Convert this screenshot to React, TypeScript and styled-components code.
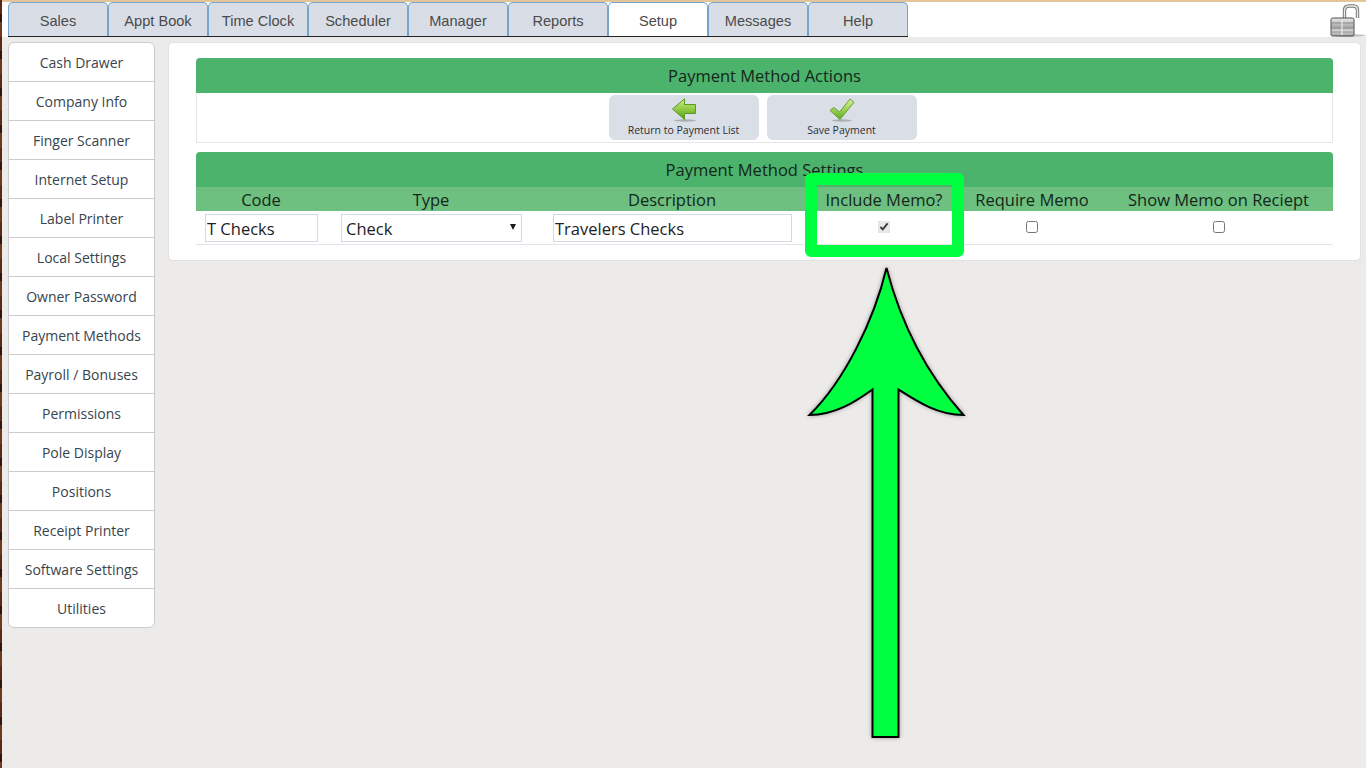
import React from 'react'
import styled, { createGlobalStyle } from 'styled-components'

const GlobalStyle = createGlobalStyle`
  html, body {
    margin: 0;
    padding: 0;
    height: 100%;
    background: #ecebe9;
    overflow: hidden;
  }
  * {
    box-sizing: border-box;
  }
`

const Page = styled.div`
  position: relative;
  width: 1366px;
  height: 768px;
  padding: 2px 0 0 2px;
  background-color: #ecebe9;
  font-family: "Open Sans", sans-serif;
  color: #1c2a22;
  overflow: hidden;
`

const TopEdge = styled.div`
  position: absolute;
  top: 0;
  left: 0;
  right: 0;
  height: 2px;
  background: #e6c49a;
`

const LeftEdge = styled.div`
  position: absolute;
  top: 0;
  left: 0;
  bottom: 0;
  width: 2px;
  background: repeating-linear-gradient(180deg, #5a2a14 0 14px, #2f150b 14px 22px, #6e3a1e 22px 37px);
`

const TopBar = styled.div`
  display: flex;
  justify-content: space-between;
  height: 35px;
  padding-left: 6px;
  background: #fff;
`

const Tabs = styled.nav`
  display: flex;
  height: 35px;
  border-bottom: 1px solid #1d2326;
`

const Tab = styled.div<{ $active?: boolean }>`
  display: flex;
  align-items: center;
  justify-content: center;
  width: 100px;
  height: 34px;
  padding-top: 3px;
  background: ${p => (p.$active ? '#fff' : '#d9dee6')};
  border: 1px solid #74a5cf;
  border-bottom: none;
  border-radius: 5px 5px 0 0;
  font-family: "Liberation Sans", Arial, sans-serif;
  font-size: 14.6px;
  color: #4a4a4a;
`

const LockBox = styled.div`
  width: 36px;
  height: 35px;
  margin-right: 0;
  padding: 1px 0 0 0;
`

const Body = styled.div`
  display: flex;
  align-items: flex-start;
  gap: 13px;
  padding: 5px 5px 0 6px;
`

const SideMenu = styled.ul`
  width: 148px;
  margin: 0;
  padding: 0;
  list-style: none;
  background: #fff;
  border: 1px solid #cccccc;
  border-radius: 6px;
`

const SideItem = styled.li`
  display: flex;
  align-items: center;
  justify-content: center;
  height: 39px;
  font-size: 14px;
  color: #38444d;
  border-bottom: 1px solid #cccccc;

  &:last-child {
    height: 38px;
    border-bottom: none;
  }
`

const Card = styled.main`
  flex: 1;
  height: 219px;
  padding: 15px 27px 0;
  background: #fff;
  border: 1px solid #e2e2e2;
  border-radius: 5px;
`

const SectionTitle = styled.h2`
  display: flex;
  align-items: center;
  justify-content: center;
  height: 35px;
  margin: 0;
  background: #4bb36b;
  border-radius: 4px 4px 0 0;
  font-size: 16.5px;
  font-weight: 400;
  color: #14261b;
`

const ActionsRow = styled.div`
  display: flex;
  justify-content: center;
  gap: 8px;
  height: 50px;
  margin-bottom: 9px;
  padding: 2px 4px 0 0;
  border: 1px solid #e6e6e6;
  border-top: none;
`

const ActionButton = styled.button`
  display: flex;
  flex-direction: column;
  align-items: center;
  width: 150px;
  height: 45px;
  padding: 3px 0 0;
  background: #dadee6;
  border: none;
  border-radius: 6px;
  font-family: "Open Sans", sans-serif;
  font-size: 10.5px;
  line-height: 14px;
  color: #2a2f33;

  svg {
    display: block;
    margin-bottom: 1px;
  }
`

const SettingsGrid = styled.div`
  display: grid;
  grid-template-columns: 130px 210px 272px 152px 144px 229px;
`

const HeadCell = styled.div`
  display: flex;
  align-items: center;
  justify-content: center;
  height: 24px;
  background: #6dc07f;
  font-size: 16.5px;
  color: #14261b;
`

const Cell = styled.div<{ $pad: number; $width: number }>`
  height: 34px;
  padding: 3px 0 0 ${p => p.$pad}px;
  border-bottom: 1px solid #e2e4ea;

  & > * {
    width: ${p => p.$width}px;
  }
`

const CheckCell = styled.div`
  display: flex;
  justify-content: center;
  height: 34px;
  padding-top: 10px;
  border-bottom: 1px solid #e2e4ea;
`

const TextField = styled.input`
  display: block;
  height: 28px;
  padding: 0 0 0 1px;
  background: #fff;
  border: 1px solid #d6d8e2;
  font-family: "Open Sans", sans-serif;
  font-size: 16.5px;
  color: #1c2226;
  outline: none;
`

const SelectField = styled.div`
  display: flex;
  align-items: center;
  justify-content: space-between;
  height: 28px;
  padding: 0 5px 0 4px;
  background: #fff;
  border: 1px solid #d6d8e2;
  font-size: 16.5px;
  color: #1c2226;
`

const Caret = styled.span`
  width: 0;
  height: 0;
  margin-bottom: 3px;
  border-left: 3px solid transparent;
  border-right: 3px solid transparent;
  border-top: 6px solid #1a1a1a;
`

const CheckBox = styled.input`
  width: 12px;
  height: 12px;
  margin: 0;
  accent-color: #e8e8e8;
`

const Highlight = styled.div`
  position: absolute;
  left: 805px;
  top: 173px;
  width: 159px;
  height: 84px;
  border: 12px solid #00ff41;
  border-radius: 6px;
`

const CalloutArrow = styled.svg`
  position: absolute;
  left: 790px;
  top: 250px;
`

const menuItems = [
  'Cash Drawer', 'Company Info', 'Finger Scanner', 'Internet Setup', 'Label Printer',
  'Local Settings', 'Owner Password', 'Payment Methods', 'Payroll / Bonuses', 'Permissions',
  'Pole Display', 'Positions', 'Receipt Printer', 'Software Settings', 'Utilities',
]

const tabs = ['Sales', 'Appt Book', 'Time Clock', 'Scheduler', 'Manager', 'Reports', 'Setup', 'Messages', 'Help']

const columns = ['Code', 'Type', 'Description', 'Include Memo?', 'Require Memo', 'Show Memo on Reciept']

const LockIcon = () => (
  <svg width="36" height="35" viewBox="0 0 36 35">
    <defs>
      <linearGradient id="lockBody" x1="0" y1="0" x2="0" y2="1">
        <stop offset="0" stopColor="#e8e8e8" />
        <stop offset="0.5" stopColor="#a9a9a9" />
        <stop offset="0.75" stopColor="#dcdcdc" />
        <stop offset="1" stopColor="#9a9a9a" />
      </linearGradient>
    </defs>
    <ellipse cx="20" cy="32.5" rx="16" ry="1.4" fill="#9c9c9c" opacity="0.6" />
    <path d="M14.5 15V7.5C14.5 4.5 16.5 3 19 3h4.5c2.5 0 4 1.5 4 4.5V15" fill="none" stroke="#777" strokeWidth="3.4" />
    <path d="M14.5 15V7.5C14.5 4.5 16.5 3 19 3h4.5c2.5 0 4 1.5 4 4.5V15" fill="none" stroke="#e8e8e8" strokeWidth="1.4" />
    <rect x="1" y="15" width="23" height="18" rx="1.5" fill="url(#lockBody)" stroke="#4f4f4f" />
    <path d="M2 20h21M2 25h21M2 29h21" stroke="#8a8a8a" strokeWidth="1" />
    <path d="M12 16v16" stroke="#ededed" strokeWidth="1.2" />
  </svg>
)

const BackIcon = () => (
  <svg width="26" height="24" viewBox="0 0 26 24">
    <defs>
      <linearGradient id="backFill" x1="0" y1="0" x2="0" y2="1">
        <stop offset="0" stopColor="#cdec8a" />
        <stop offset="0.55" stopColor="#8cc63e" />
        <stop offset="1" stopColor="#4f9a1c" />
      </linearGradient>
    </defs>
    <ellipse cx="14" cy="22.5" rx="11" ry="1.2" fill="#8b8f8f" opacity="0.6" />
    <path d="M1.5 11 13.5 0.8V6.5H24.5V15.5H13.5V21.5Z" fill="url(#backFill)" stroke="#5c9a26" strokeWidth="1" strokeLinejoin="round" />
  </svg>
)

const SaveIcon = () => (
  <svg width="26" height="24" viewBox="0 0 26 24">
    <defs>
      <linearGradient id="saveFill" x1="0" y1="0" x2="0" y2="1">
        <stop offset="0" stopColor="#d8f0a0" />
        <stop offset="0.6" stopColor="#93cb4a" />
        <stop offset="1" stopColor="#5ea526" />
      </linearGradient>
    </defs>
    <ellipse cx="13" cy="22.5" rx="10" ry="1.2" fill="#8b8f8f" opacity="0.6" />
    <path d="M1 12.5 5 9.5 10.5 14 21 1l4 3.2L11 21.5Z" fill="url(#saveFill)" stroke="#6aa333" strokeWidth="1" strokeLinejoin="round" />
  </svg>
)

const App = () => (
  <Page>
    <GlobalStyle />
    <TopEdge />
    <LeftEdge />
    <TopBar>
      <Tabs>
        {tabs.map(t => (
          <Tab key={t} $active={t === 'Setup'}>{t}</Tab>
        ))}
      </Tabs>
      <LockBox>
        <LockIcon />
      </LockBox>
    </TopBar>
    <Body>
      <SideMenu>
        {menuItems.map(m => (
          <SideItem key={m}>{m}</SideItem>
        ))}
      </SideMenu>
      <Card>
        <SectionTitle>Payment Method Actions</SectionTitle>
        <ActionsRow>
          <ActionButton>
            <BackIcon />
            Return to Payment List
          </ActionButton>
          <ActionButton>
            <SaveIcon />
            Save Payment
          </ActionButton>
        </ActionsRow>
        <SectionTitle>Payment Method Settings</SectionTitle>
        <SettingsGrid>
          {columns.map(c => (
            <HeadCell key={c}>{c}</HeadCell>
          ))}
          <Cell $pad={9} $width={113}>
            <TextField defaultValue="T Checks" />
          </Cell>
          <Cell $pad={15} $width={181}>
            <SelectField>
              Check
              <Caret />
            </SelectField>
          </Cell>
          <Cell $pad={17} $width={239}>
            <TextField defaultValue="Travelers Checks" />
          </Cell>
          <CheckCell>
            <CheckBox type="checkbox" defaultChecked />
          </CheckCell>
          <CheckCell>
            <CheckBox type="checkbox" />
          </CheckCell>
          <CheckCell>
            <CheckBox type="checkbox" />
          </CheckCell>
        </SettingsGrid>
      </Card>
    </Body>
    <Highlight />
    <CalloutArrow width="190" height="500" viewBox="790 250 190 500">
      <defs>
        <filter id="arrowShadow" x="-20%" y="-20%" width="140%" height="140%">
          <feDropShadow dx="0" dy="0" stdDeviation="2" floodColor="#000" floodOpacity="0.35" />
        </filter>
      </defs>
      <path
        d="M886.5 268 C874 320 845 380 809.5 415 C835 415 855 402 872.5 389.5 V737 H898.5 V389.5 C918 402 938 415 963.5 415 C925 372 900 320 886.5 268 Z"
        fill="#00ff41"
        stroke="#000"
        strokeWidth="2"
        strokeLinejoin="miter"
        filter="url(#arrowShadow)"
      />
    </CalloutArrow>
  </Page>
)

export default App
